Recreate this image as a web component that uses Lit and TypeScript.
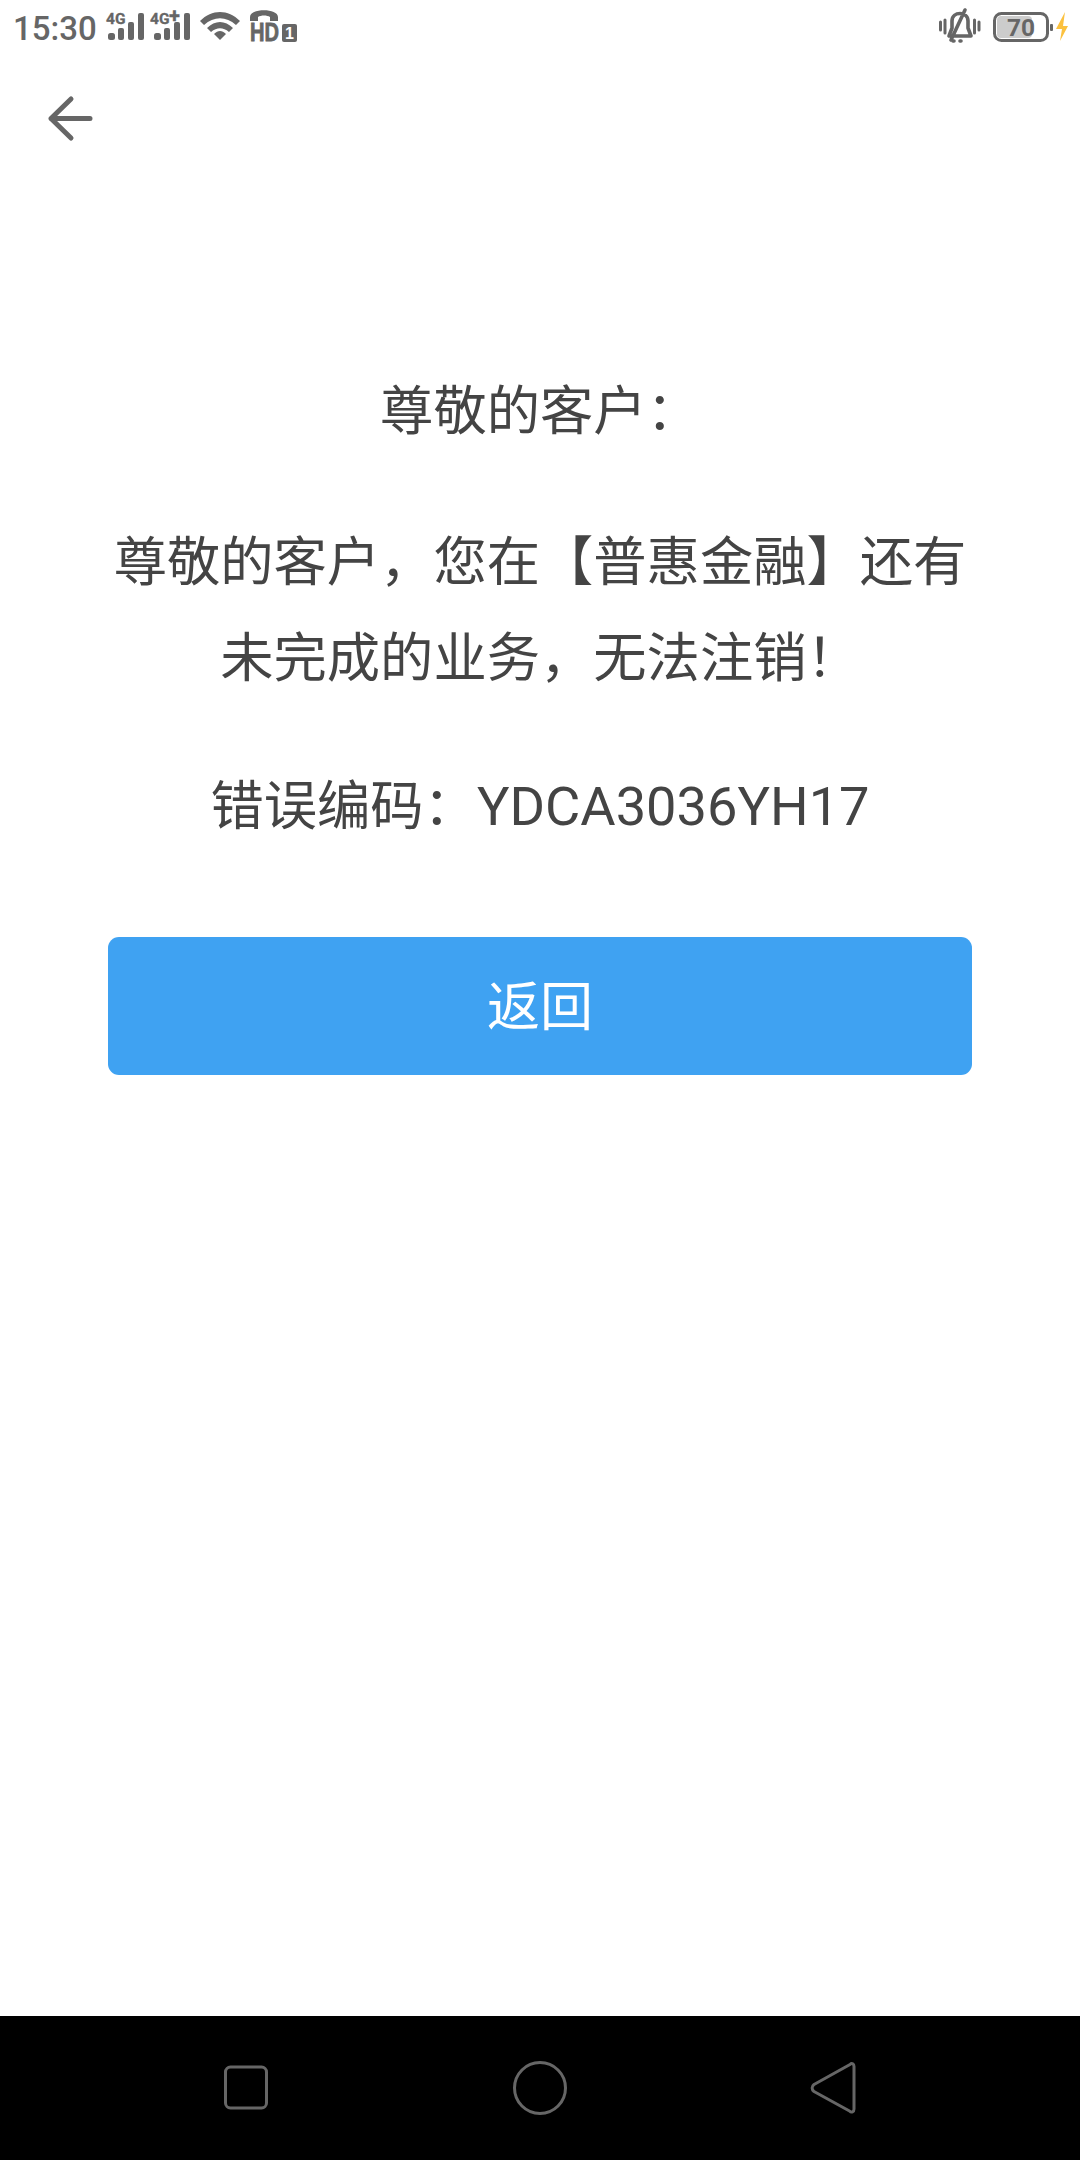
import { LitElement, html, css, svg } from "lit";
import { customElement } from "lit/decorators.js";

const bars = (x: number) => svg`
  <rect x="${x}" y="33" width="7" height="7" rx="2.5"/>
  <rect x="${x + 10}" y="28" width="6" height="12" rx="2"/>
  <rect x="${x + 20}" y="22" width="6" height="18" rx="2"/>
  <rect x="${x + 30}" y="13" width="6" height="27" rx="2"/>`;

@customElement("app-root")
export class AppRoot extends LitElement {
  static styles = css`
    :host {
      display: flex;
      flex-direction: column;
      width: 1080px;
      height: 2160px;
      background: #fff;
      font-family: Roboto, "Noto Sans CJK SC", sans-serif;
      color: #444;
      overflow: hidden;
    }
    .status {
      height: 58px;
      display: flex;
      justify-content: space-between;
      flex: none;
    }
    .status svg { display: block; }
    .time { font-size: 33px; font-weight: 500; fill: #666; }
    .glyphs { fill: #666; }
    .net { font: 700 15.5px Roboto, sans-serif; fill: #666; stroke: #666; stroke-width: 0.3; }
    .plus { font: 700 20px Roboto, sans-serif; fill: #666; stroke: #666; stroke-width: 0.3; }
    .hd { font: 700 25px "Liberation Sans", sans-serif; fill: #666; stroke: #666; stroke-width: 0.8; }
    .one { font: 700 16px "Liberation Sans", sans-serif; fill: #fff; }
    .pct { font: 700 24.5px Roboto, sans-serif; fill: #666; }
    .line { fill: none; stroke: #666; stroke-linecap: round; stroke-linejoin: round; }
    .header {
      height: 120px;
      flex: none;
      display: flex;
      align-items: center;
      padding-left: 46px;
    }
    .content {
      flex: 1;
      padding: 186px 108px 0;
      text-align: center;
      font-size: 53.3px;
      line-height: 97px;
    }
    .title { margin: 0 0 54px; }
    .body { margin: 0 0 52px; line-height: 96px; }
    .code { margin: 0 0 81px; }
    .latin { font-size: 54.2px; line-height: 1; }
    .btn {
      height: 138px;
      border-radius: 11px;
      background: #3fa2f2;
      color: #fff;
      font-size: 53px;
      display: flex;
      align-items: center;
      justify-content: center;
      padding-top: 5px;
      box-sizing: border-box;
    }
    .nav {
      height: 144px;
      flex: none;
      background: #000;
      display: block;
    }
    .nav svg { display: block; }
  `;

  render() {
    return html`
      <div class="status">
        <svg width="320" height="58" viewBox="0 0 320 58" class="glyphs">
          <text class="time" x="13" y="40">15:30</text>
          <text class="net" x="106" y="24">4G</text>
          ${bars(108)}
          <text class="net" x="150" y="24">4G</text>
          <text class="plus" x="169" y="23">+</text>
          ${bars(154)}
          <path d="M200 21 C212 9 228 9 240 21 L236 25 C226 16 214 16 204 25Z"/>
          <path d="M207 28 C215 20 225 20 233 28 L229 32 C223 27 217 27 211 32Z"/>
          <path d="M214 34 C218 30 222 30 226 34 L220 40Z"/>
          <path d="M250 21 V17 C250 8 278 8 278 17 V21 H270 V17 C267 15 261 15 258 17 V21Z"/>
          <text class="hd" x="250" y="41" textLength="29" lengthAdjust="spacingAndGlyphs">HD</text>
          <rect x="282" y="24" width="15" height="18" rx="2"/>
          <text class="one" x="285" y="39">1</text>
        </svg>
        <svg width="150" height="58" viewBox="930 0 150 58" class="glyphs">
          <path class="line" stroke-width="3" d="M940.5 22 V30 M945 20 V33 M974.5 20 V33 M979 22 V30"/>
          <path class="line" stroke-width="3.6" d="M949 36 H971 L968 28 V21 C968 11 952 11 952 21 V28 Z M953 41 H954 M960 41 H961 M965 10 L951 40"/>
          <rect x="994.5" y="13.5" width="53" height="27" rx="7" fill="none" stroke="#666" stroke-width="3"/>
          <rect x="997" y="16" width="35" height="22" rx="4" fill="#ccc"/>
          <text class="pct" x="1007" y="36">70</text>
          <rect x="1050" y="24" width="3" height="7" rx="1"/>
          <path d="M1065 12 L1056 29 H1062 L1060 41 L1068 26 H1063Z" fill="#fbc13f"/>
        </svg>
      </div>
      <div class="header">
        <svg width="50" height="50" viewBox="46 93 50 50">
          <path class="line" stroke-width="5" d="M71 99 L51 118.5 L71 138 M51 118.5 H90"/>
        </svg>
      </div>
      <div class="content">
        <p class="title">尊敬的客户：</p>
        <p class="body">尊敬的客户，您在【普惠金融】还有未完成的业务，无法注销！</p>
        <p class="code">错误编码：<span class="latin">YDCA3036YH17</span></p>
        <div class="btn">返回</div>
      </div>
      <div class="nav">
        <svg width="1080" height="144" viewBox="0 2016 1080 144">
          <rect x="225.5" y="2067" width="41" height="41" rx="5" fill="none" stroke="#666" stroke-width="3"/>
          <circle cx="540" cy="2088" r="25.5" fill="none" stroke="#666" stroke-width="3"/>
          <path class="line" stroke-width="3" d="M850 2064.5 C852 2062.5 854 2064 854 2066.5 V2109 C854 2112 851.5 2113 849.5 2111 L814 2091.5 C811.5 2089.5 811.5 2086.5 814 2084.5 Z"/>
        </svg>
      </div>
    `;
  }
}
